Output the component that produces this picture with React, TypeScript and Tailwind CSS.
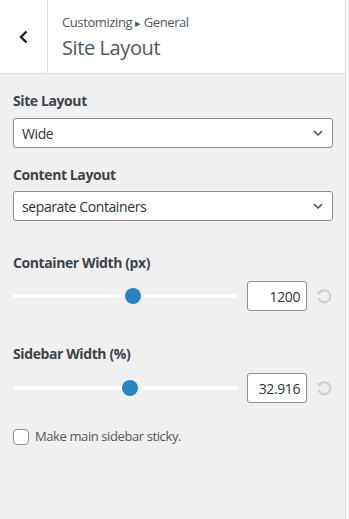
import React from "react";

const font = { fontFamily: '"Open Sans", "Noto Sans", sans-serif' };

function Chevron() {
  return (
    <svg width="10" height="7" viewBox="0 0 10 7" className="shrink-0">
      <path d="M1 1.2 L5 5 L9 1.2" fill="none" stroke="#50575e" strokeWidth="1.6" />
    </svg>
  );
}

function Select({ value }: { value: string }) {
  return (
    <div className="h-[30px] w-[320px] bg-white border border-[#8c8f94] rounded-[3px] flex items-center justify-between pl-[8px] pr-[9px] text-[14px] text-[#2c3338]">
      <span>{value}</span>
      <Chevron />
    </div>
  );
}

function Reset() {
  return (
    <svg width="18" height="18" viewBox="0 0 18 18" className="shrink-0">
      <path d="M4.2 6.2 A6 6 0 1 1 3.6 11" fill="none" stroke="#d0d0d2" strokeWidth="2.2" strokeLinecap="butt" />
      <path d="M1.5 4.2 L6.8 4.2 L4.2 8.6 Z" fill="#d0d0d2" transform="rotate(10 4 6)" />
    </svg>
  );
}

function SliderRow({ frac, value }: { frac: number; value: string }) {
  return (
    <div className="flex items-center h-[30px]">
      <div className="relative shrink-0 w-[225px] h-[4px] bg-white rounded-full">
        <div
          className="absolute top-1/2 w-[16px] h-[16px] -mt-[8px] rounded-full bg-[#2a84c1]"
          style={{ left: `${frac * 209}px` }}
        />
      </div>
      <div className="shrink-0 ml-[9px] w-[60px] h-[30px] bg-white border border-[#8c8f94] rounded-[3px] flex items-center justify-end pr-[6px] text-[14px] text-[#2c3338]">
        {value}
      </div>
      <div className="shrink-0 ml-[8px] flex items-center">
        <Reset />
      </div>
    </div>
  );
}

export default function App() {
  return (
    <div className="w-[349px] h-[519px] bg-[#f6f7f7] flex tracking-[-0.4px]" style={font}>
      <div className="w-[346px] h-full bg-[#f0f0f1] border-r border-[#dcdcde] flex flex-col">
        <div className="h-[74px] bg-white border-b border-[#dcdcde] flex shrink-0">
          <div className="w-[48px] border-r border-[#dcdcde] flex items-center justify-center">
            <svg width="12" height="14" viewBox="0 0 12 14">
              <path d="M8.5 1.5 L3 7 L8.5 12.5" fill="none" stroke="#1d2327" strokeWidth="2.4" />
            </svg>
          </div>
          <div className="pl-[14px] pt-[12px] flex flex-col">
            <div className="text-[13px] leading-[20px] text-[#50575e]">
              Customizing <span className="text-[11px]">▸</span> General
            </div>
            <div className="text-[20px] leading-[28px] text-[#50575e] mt-[1px]">Site Layout</div>
          </div>
        </div>
        <div className="px-[13px] pt-[17px] flex flex-col">
          <div className="text-[14px] leading-[20px] font-bold text-[#3c434a]">Site Layout</div>
          <div className="mt-[7px]">
            <Select value="Wide" />
          </div>
          <div className="mt-[17px] text-[14px] leading-[20px] font-bold text-[#3c434a]">Content Layout</div>
          <div className="mt-[6px]">
            <Select value="separate Containers" />
          </div>
          <div className="mt-[32px] text-[14px] leading-[20px] font-bold text-[#3c434a]">Container Width (px)</div>
          <div className="mt-[8px]">
            <SliderRow frac={0.536} value="1200" />
          </div>
          <div className="mt-[33px] text-[14px] leading-[20px] font-bold text-[#3c434a]">Sidebar Width (%)</div>
          <div className="mt-[9px]">
            <SliderRow frac={0.52} value="32.916" />
          </div>
          <div className="mt-[24px] flex items-center">
            <div className="w-[16px] h-[16px] bg-white border border-[#8c8f94] rounded-[4px]" />
            <span className="ml-[6px] text-[13px] text-[#50575e]">Make main sidebar sticky.</span>
          </div>
        </div>
      </div>
    </div>
  );
}
